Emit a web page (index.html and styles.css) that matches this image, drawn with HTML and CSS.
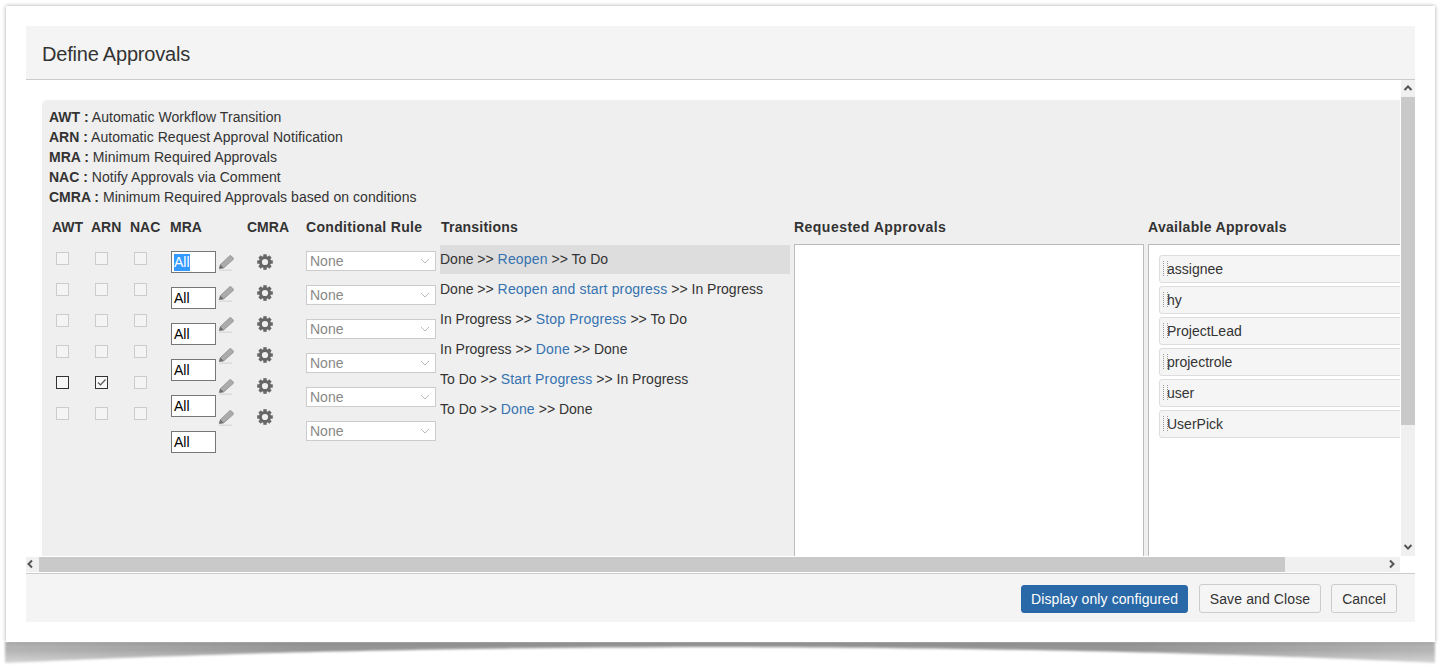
FILE: index.html
```html
<!DOCTYPE html>
<html lang="en">
<head>
<meta charset="utf-8">
<title>Define Approvals</title>
<link rel="stylesheet" href="styles.css">
</head>
<body>
<svg class="defs" width="0" height="0" aria-hidden="true">
  <defs>
    <symbol id="gear" viewBox="0 0 16 16">
      <circle cx="8" cy="8" r="4.6" fill="none" stroke="#666" stroke-width="3"/>
      <g stroke="#666" stroke-width="3.4">
        <line x1="8" y1="0.2" x2="8" y2="3.5"/><line x1="8" y1="12.5" x2="8" y2="15.8"/>
        <line x1="0.2" y1="8" x2="3.5" y2="8"/><line x1="12.5" y1="8" x2="15.8" y2="8"/>
        <line x1="2.5" y1="2.5" x2="4.8" y2="4.8"/><line x1="11.2" y1="11.2" x2="13.5" y2="13.5"/>
        <line x1="13.5" y1="2.5" x2="11.2" y2="4.8"/><line x1="4.8" y1="11.2" x2="2.5" y2="13.5"/>
      </g>
    </symbol>
    <symbol id="pencil" viewBox="0 0 17 17">
      <path d="M1.2 13.6 2.4 9.6 11.6 .9Q12.4.3 13.2.9L15.2 3Q15.8 3.8 15.2 4.5L5.6 13Z" fill="#ababab" stroke="#8f8f8f" stroke-width=".8"/>
      <path d="M1.2 13.6 2.4 9.6 5.6 13Z" fill="#6e6e6e"/>
      <path d="M1 15.2H14" stroke="#dcdcdc" stroke-width="1.6"/>
    </symbol>
    <symbol id="chev" viewBox="0 0 10 6">
      <path d="M1 1 5 5 9 1" fill="none" stroke="#bbb" stroke-width="1"/>
    </symbol>
    <linearGradient id="shade" x1="0" x2="1" y1="0" y2="0">
      <stop offset="0" stop-color="#b4b4b4"/>
      <stop offset=".22" stop-color="#959595"/>
      <stop offset=".78" stop-color="#959595"/>
      <stop offset="1" stop-color="#b4b4b4"/>
    </linearGradient>
  </defs>
</svg>

<div class="page">
  <svg class="curl" width="1449" height="40" viewBox="0 0 1449 40" aria-hidden="true">
    <path class="curl-shape" d="M5 0H1435V21C1300 15 1100 6 720 5 340 6 140 15 5 21Z" fill="url(#shade)"/>
  </svg>
  <div class="frame">
    <div class="dialog">
      <header class="dialog-head"><h2 class="dialog-title">Define Approvals</h2></header>
      <div class="dialog-body">
        <div class="scroll-row">
          <div class="viewport">
            <div class="panel">
              <div class="legend">
                <div><b>AWT :</b> Automatic Workflow Transition</div>
                <div><b>ARN :</b> Automatic Request Approval Notification</div>
                <div><b>MRA :</b> Minimum Required Approvals</div>
                <div><b>NAC :</b> Notify Approvals via Comment</div>
                <div><b>CMRA :</b> Minimum Required Approvals based on conditions</div>
              </div>
              <div class="columns">
                <div class="col col-cb">
                  <div class="col-head">AWT</div>
                  <div class="stack stack-cb">
                    <span class="cb"></span><span class="cb"></span><span class="cb"></span><span class="cb"></span>
                    <span class="cb cb-dark"></span><span class="cb"></span>
                  </div>
                </div>
                <div class="col col-cb">
                  <div class="col-head">ARN</div>
                  <div class="stack stack-cb">
                    <span class="cb"></span><span class="cb"></span><span class="cb"></span><span class="cb"></span>
                    <span class="cb cb-dark"><svg class="tick" viewBox="0 0 11 11"><path d="M2 5.5 4.5 8 9.5 2.5" fill="none" stroke="#555" stroke-width="1.2"/></svg></span>
                    <span class="cb"></span>
                  </div>
                </div>
                <div class="col col-cb">
                  <div class="col-head">NAC</div>
                  <div class="stack stack-cb">
                    <span class="cb"></span><span class="cb"></span><span class="cb"></span><span class="cb"></span><span class="cb"></span><span class="cb"></span>
                  </div>
                </div>
                <div class="col col-mra">
                  <div class="col-head">MRA</div>
                  <div class="stack stack-mra">
                    <div class="mra"><span class="selected">All</span></div>
                    <div class="mra">All</div><div class="mra">All</div><div class="mra">All</div><div class="mra">All</div><div class="mra">All</div>
                  </div>
                </div>
                <div class="col col-pencil">
                  <div class="col-head">&nbsp;</div>
                  <div class="stack stack-pencil">
                    <svg class="pencil"><use href="#pencil"/></svg><svg class="pencil"><use href="#pencil"/></svg><svg class="pencil"><use href="#pencil"/></svg>
                    <svg class="pencil"><use href="#pencil"/></svg><svg class="pencil"><use href="#pencil"/></svg><svg class="pencil"><use href="#pencil"/></svg>
                  </div>
                </div>
                <div class="col col-gear">
                  <div class="col-head">CMRA</div>
                  <div class="stack stack-gear">
                    <svg class="gear"><use href="#gear"/></svg><svg class="gear"><use href="#gear"/></svg><svg class="gear"><use href="#gear"/></svg>
                    <svg class="gear"><use href="#gear"/></svg><svg class="gear"><use href="#gear"/></svg><svg class="gear"><use href="#gear"/></svg>
                  </div>
                </div>
                <div class="col col-rule">
                  <div class="col-head col-head-wide">Conditional Rule</div>
                  <div class="stack stack-rule">
                    <div class="select">None<svg class="chev"><use href="#chev"/></svg></div>
                    <div class="select">None<svg class="chev"><use href="#chev"/></svg></div>
                    <div class="select">None<svg class="chev"><use href="#chev"/></svg></div>
                    <div class="select">None<svg class="chev"><use href="#chev"/></svg></div>
                    <div class="select">None<svg class="chev"><use href="#chev"/></svg></div>
                    <div class="select">None<svg class="chev"><use href="#chev"/></svg></div>
                  </div>
                </div>
                <div class="col col-trans">
                  <div class="col-head col-head-trans">Transitions</div>
                  <div class="stack">
                    <div class="trans trans-on">Done &gt;&gt; <a>Reopen</a> &gt;&gt; To Do</div>
                    <div class="trans">Done &gt;&gt; <a>Reopen and start progress</a> &gt;&gt; In Progress</div>
                    <div class="trans">In Progress &gt;&gt; <a>Stop Progress</a> &gt;&gt; To Do</div>
                    <div class="trans">In Progress &gt;&gt; <a>Done</a> &gt;&gt; Done</div>
                    <div class="trans">To Do &gt;&gt; <a>Start Progress</a> &gt;&gt; In Progress</div>
                    <div class="trans">To Do &gt;&gt; <a>Done</a> &gt;&gt; Done</div>
                  </div>
                </div>
                <div class="col col-req">
                  <div class="col-head col-head-req">Requested Approvals</div>
                  <div class="box"></div>
                </div>
                <div class="col col-avail">
                  <div class="col-head col-head-wide">Available Approvals</div>
                  <div class="box box-list">
                    <div class="item">assignee</div>
                    <div class="item">hy</div>
                    <div class="item">ProjectLead</div>
                    <div class="item">projectrole</div>
                    <div class="item">user</div>
                    <div class="item">UserPick</div>
                  </div>
                </div>
              </div>
            </div>
          </div>
          <div class="vscroll">
            <div class="arrow-v"><svg class="arr" viewBox="0 0 10 10"><path d="M1.5 7 5 3.5 8.5 7" fill="none" stroke="#555" stroke-width="2"/></svg></div>
            <div class="vthumb"></div>
            <div class="vtrack"></div>
            <div class="arrow-v"><svg class="arr" viewBox="0 0 10 10"><path d="M1.5 3 5 6.5 8.5 3" fill="none" stroke="#555" stroke-width="2"/></svg></div>
          </div>
        </div>
        <div class="hscroll-row">
          <div class="hscroll">
            <div class="arrow-h arrow-left"><svg class="arr" viewBox="0 0 10 10"><path d="M7 1.5 3.5 5 7 8.5" fill="none" stroke="#555" stroke-width="2"/></svg></div>
            <div class="hthumb"></div>
            <div class="htrack"></div>
            <div class="arrow-h arrow-right"><svg class="arr" viewBox="0 0 10 10"><path d="M3 1.5 6.5 5 3 8.5" fill="none" stroke="#555" stroke-width="2"/></svg></div>
          </div>
        </div>
      </div>
      <footer class="dialog-foot">
        <button class="btn btn-primary">Display only configured</button>
        <button class="btn btn-save">Save and Close</button>
        <button class="btn btn-cancel">Cancel</button>
      </footer>
    </div>
  </div>
</div>
</body>
</html>
```
FILE: styles.css
```css
* { box-sizing: border-box; }
html, body { margin: 0; padding: 0; background: #fff; }
body { width: 1449px; height: 671px; overflow: hidden; font-family: "Liberation Sans", Arial, sans-serif; font-size: 14px; color: #333; }
.defs { position: absolute; }
.page { position: relative; padding: 6px 14px 0 6px; }
.curl { position: absolute; left: 0; top: 642px; -webkit-mask-image: linear-gradient(to bottom, #000 20%, rgba(0,0,0,.45) 60%); mask-image: linear-gradient(to bottom, #000 20%, rgba(0,0,0,.45) 60%); }
.curl-shape { filter: blur(1.2px); }
.frame { position: relative; width: 1429px; height: 636px; padding: 20px; background: #fff; box-shadow: 0 0 4px rgba(0,0,0,.35); }
.dialog { display: flex; flex-direction: column; height: 596px; background: #fff; }
.dialog-head { height: 54px; background: #f4f4f4; border-bottom: 1px solid #ccc; padding: 4px 0 0 16px; display: flex; align-items: center; }
.dialog-title { margin: 0; font-size: 20px; font-weight: 400; color: #333; line-height: 24px; letter-spacing: -.2px; }
.dialog-body { height: 494px; display: flex; flex-direction: column; }
.scroll-row { display: flex; height: 477px; }
.viewport { flex: 1; min-width: 0; padding: 20px 1px 1px 16px; }
.panel { height: 456px; background: #efefef; border-top-left-radius: 5px; padding: 7px 0 0 7px; overflow: hidden; }
.legend { line-height: 20px; color: #333; letter-spacing: .05px; }
.legend b { font-weight: 700; letter-spacing: 0; }
.columns { display: flex; margin-top: 10px; width: 1500px; }
.col-head { font-weight: 700; line-height: 20px; margin-bottom: 7px; color: #333; white-space: nowrap; }
.col-head-wide { letter-spacing: .32px; }
.col-head-req { letter-spacing: .47px; }
.col-cb { width: 39px; padding-left: 3px; }
.col-mra { width: 52px; padding-left: 4px; }
.col-pencil { width: 26px; }
.col-gear { width: 62px; padding-left: 3px; }
.col-rule { width: 134px; }
.col-trans { width: 354px; }
.col-head-trans { padding-left: 1px; letter-spacing: .2px; }
.col-req { width: 354px; }
.col-avail { width: 360px; }
.stack { display: flex; flex-direction: column; }
.stack-cb { padding: 8px 0 0 4px; gap: 18px; }
.cb { display: block; width: 13px; height: 13px; border: 1px solid #ccc; background: #f4f4f4; }
.cb-dark { border-color: #333; background: #f7f7f7; }
.tick { display: block; width: 11px; height: 11px; }
.stack-mra { padding: 7px 0 0 1px; gap: 14px; }
.mra { width: 45px; height: 22px; border: 1px solid #767676; background: #fff; color: #000; line-height: 21px; padding-left: 2px; }
.selected { background: #3399ff; color: #fff; display: inline-block; line-height: 17px; }
.stack-pencil { padding: 11px 0 0 0; gap: 14px; }
.pencil { display: block; width: 17px; height: 17px; }
.stack-gear { padding: 10px 0 0 10px; gap: 15px; }
.gear { display: block; width: 16px; height: 16px; }
.stack-rule { padding-top: 7px; gap: 14px; }
.select { display: flex; align-items: center; justify-content: space-between; width: 130px; height: 20px; border: 1px solid #ccc; background: #fff; color: #888; font-size: 14px; padding: 0 3px; }
.chev { display: block; width: 10px; height: 6px; margin-right: 2px; }
.trans { width: 350px; height: 29px; margin: 1px 0 0 0; line-height: 29px; color: #333; white-space: nowrap; }
.trans-on { background: #ddd; }
.trans a { color: #3572b0; letter-spacing: .16px; }
.box { width: 350px; height: 400px; background: #fff; border: 1px solid #bbb; }
.box-list { padding: 10px; display: flex; flex-direction: column; gap: 3px; }
.item { position: relative; height: 28px; background: #f5f5f5; border: 1px solid #ddd; border-radius: 3px; line-height: 26px; padding-left: 7px; color: #333; flex: none; }
.item::before { content: ""; position: absolute; left: 3px; top: 5px; width: 3px; height: 15px; border-left: 1px dotted #999; border-right: 1px dotted #999; }
.vscroll { width: 14px; height: 476px; display: flex; flex-direction: column; background: #f0f0f0; }
.arrow-v { height: 17px; display: flex; align-items: center; justify-content: center; background: #f0f0f0; flex: none; }
.arr { display: block; width: 10px; height: 10px; flex: none; }
.vthumb { height: 328px; background: #c9c9c9; flex: none; }
.vtrack { flex: 1; }
.hscroll-row { height: 16px; padding-right: 15px; }
.hscroll { display: flex; height: 15px; background: #f0f0f0; }
.arrow-h { width: 13px; display: flex; align-items: center; flex: none; }
.arrow-left .arr { margin-left: -1px; }
.hthumb { width: 1246px; background: #c9c9c9; flex: none; }
.htrack { flex: 1; }
.dialog-foot { height: 49px; background: #f4f4f4; border-top: 1px solid #ccc; display: flex; align-items: flex-start; justify-content: flex-end; gap: 10px; padding: 10px 18px 0 0; }
.btn { height: 29px; padding: 0; font: 14px "Liberation Sans", Arial, sans-serif; color: #333; background: #f5f5f5; border: 1px solid #ccc; border-radius: 3px; }
.btn-save { width: 122px; letter-spacing: .12px; }
.btn-cancel { width: 66px; }
.btn-primary { width: 167px; margin: 1px 1px 0 0; height: 28px; color: #fff; background: #2a69a8; border-color: #2a69a8; letter-spacing: .1px; }
```
